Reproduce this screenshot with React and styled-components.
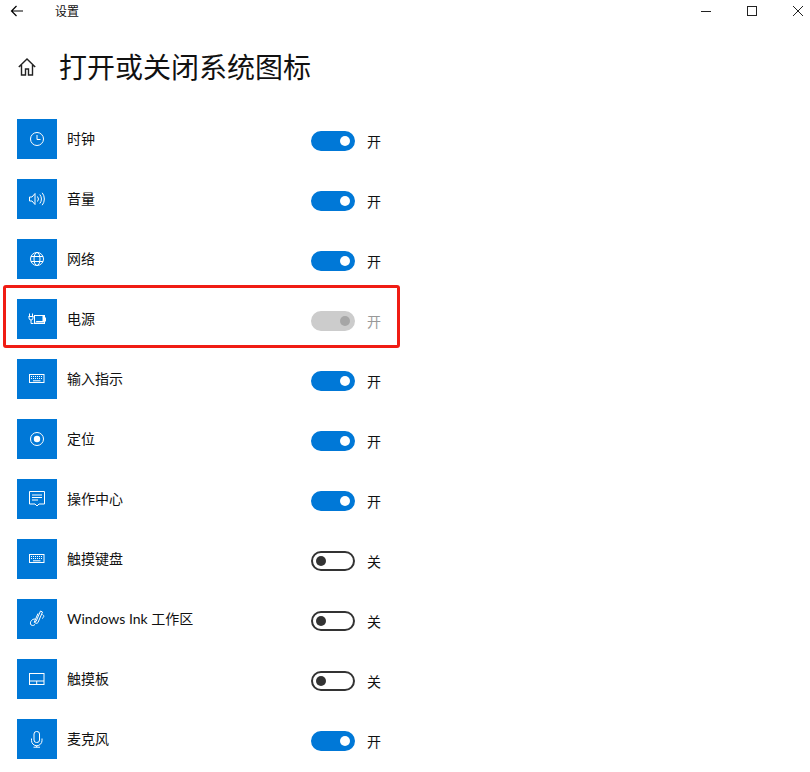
import styled, { createGlobalStyle } from 'styled-components'

const Icons = {
  clock: (
    <>
      <circle cx="20" cy="20" r="6.500" />
      <path d="M20 16v4.500h3.500" />
    </>
  ),
  volume: (
    <>
      <path d="M12.500 18h2.500l3-3.500v11l-3-3.500h-2.500z" />
      <path d="M20.500 17.500a4 4 0 0 1 0 5" />
      <path d="M22.800 15.500a7 7 0 0 1 0 9" />
      <path d="M25.200 13.800a10 10 0 0 1 0 12.400" />
    </>
  ),
  globe: (
    <>
      <circle cx="20" cy="20" r="6.500" />
      <ellipse cx="20" cy="20" rx="3" ry="6.500" />
      <path d="M14 17.500h12M14 22.500h12" />
    </>
  ),
  power: (
    <>
      <path d="M12.500 14.500v3M15.500 14.500v3M11.500 17.500h5M12 17.500v1.500a2 2 0 0 0 4 0v-1.500M14 21v3.500h2.500" />
      <rect x="17.500" y="16.500" width="10" height="8" />
      <path d="M28.500 18.500v4" />
      <path d="M18 23.500h9v-6.500h-1.500v5h-6z" fill="#fff" stroke="none" />
    </>
  ),
  keyboard: (
    <>
      <rect x="12.500" y="15.500" width="14.500" height="8" />
      <path d="M14 17.500h11.500M14 19.500h11.500" strokeDasharray="1 1" />
      <path d="M16 21.800h7.500" />
    </>
  ),
  location: (
    <>
      <circle cx="20" cy="20" r="6.500" />
      <circle cx="20" cy="20" r="3.200" fill="#fff" stroke="none" />
    </>
  ),
  action: (
    <>
      <path d="M12.500 12.500h15v12.500h-5.500l-2 2-2-2h-5.500z" />
      <path d="M15 16h10M15 18.500h10M15 21h6" />
    </>
  ),
  pen: (
    <>
      <path d="M19 22.500l4.500-10.500 2 1-4.500 10.500a2 2 0 0 1-3.500-.5z" />
      <path d="M21 14.500l-3.800 8.800M25.500 15.500c2 1 1.500 3-.5 4" />
      <path d="M18 20c-3 0-5 2.500-4.500 5 .4 1.800 3 2 4.500.500" />
    </>
  ),
  touchpad: (
    <>
      <rect x="12.500" y="14.500" width="14.500" height="11" />
      <path d="M12.500 22h14.500M19.700 22v3.500" />
    </>
  ),
  mic: (
    <>
      <rect x="17" y="12.500" width="5.500" height="11" rx="2.500" />
      <path d="M14.500 19.500v2a5.200 5.200 0 0 0 10.500 0v-2M19.700 26.700v1.500M16.500 28.200h6.500" />
    </>
  ),
}

const SETTINGS = [
  { id: 'clock', name: '时钟', on: true },
  { id: 'volume', name: '音量', on: true },
  { id: 'globe', name: '网络', on: true },
  { id: 'power', name: '电源', on: true, disabled: true },
  { id: 'keyboard', name: '输入指示', on: true },
  { id: 'location', name: '定位', on: true },
  { id: 'action', name: '操作中心', on: true },
  { id: 'keyboard', name: '触摸键盘', on: false },
  { id: 'pen', name: 'Windows Ink 工作区', on: false },
  { id: 'touchpad', name: '触摸板', on: false },
  { id: 'mic', name: '麦克风', on: true },
]

function App() {
  return (
    <Page>
      <GlobalStyle />
      <TitleBar>
        <BackIcon width="14" height="12" viewBox="0 0 14 12">
          <path d="M13 6H1.500M6.500 1l-5 5 5 5" />
        </BackIcon>
        <AppName>设置</AppName>
        <WindowControls>
          <BarIcon width="10" height="10" viewBox="0 0 10 10"><path d="M0 5.500h10" /></BarIcon>
          <BarIcon width="10" height="10" viewBox="0 0 10 10"><rect x=".5" y=".5" width="9" height="9" /></BarIcon>
          <BarIcon width="10" height="10" viewBox="0 0 10 10"><path d="M0 0l10 10M10 0L0 10" /></BarIcon>
        </WindowControls>
      </TitleBar>

      <Heading>
        <HomeIcon width="18" height="18" viewBox="0 0 18 18">
          <path d="M.8 9L9 1l8.200 8M3.500 7v10h4v-6h3v6h4V7" />
        </HomeIcon>
        <Title>打开或关闭系统图标</Title>
      </Heading>

      <List>
        {SETTINGS.map(item => (
          <Row key={item.name}>
            {item.disabled && <Highlight />}
            <Tile>
              <TileIcon viewBox="0 0 40 40">{Icons[item.id]}</TileIcon>
            </Tile>
            <Label>{item.name}</Label>
            <Toggle $on={item.on} $disabled={item.disabled}>
              <Knob $on={item.on} $disabled={item.disabled} />
            </Toggle>
            <StateText $disabled={item.disabled}>{item.on ? '开' : '关'}</StateText>
          </Row>
        ))}
      </List>
    </Page>
  )
}

export default App

/***************************** Styled Components *****************************/

const GlobalStyle = createGlobalStyle`
  html, body {
    margin: 0;
    background: #fff;
  }
`

const Page = styled.div`
  width: 810px;
  height: 772px;
  overflow: hidden;
  background: #fff;
  color: #000;
  font-family: Lato, "Noto Sans CJK SC", sans-serif;
`

const TitleBar = styled.div`
  display: flex;
  align-items: center;
  height: 22px;
  padding: 0 7px 0 10px;
`

const BarIcon = styled.svg`
  fill: none;
  stroke: #222;
  stroke-width: 1;
`

const BackIcon = styled(BarIcon)`
  stroke: #000;
  stroke-width: 1.2;
`

const AppName = styled.div`
  margin: 2px 0 0 31px;
  font-size: 12px;
  line-height: 22px;
  color: #111;
`

const WindowControls = styled.div`
  display: flex;
  gap: 36px;
  margin-left: auto;
`

const Heading = styled.div`
  display: flex;
  align-items: center;
  height: 44px;
  margin-top: 23px;
  padding-left: 18px;
`

const HomeIcon = styled.svg`
  fill: none;
  stroke: #222;
  stroke-width: 1.4;
`

const Title = styled.h1`
  margin: -1px 0 0 23px;
  font-size: 28px;
  font-weight: 400;
  line-height: 44px;
  color: #111;
`

const List = styled.div`
  display: flex;
  flex-direction: column;
  gap: 20px;
  margin-top: 30px;
  padding-left: 17px;
`

const Row = styled.div`
  position: relative;
  display: flex;
  align-items: flex-start;
  height: 40px;
`

const Highlight = styled.div`
  position: absolute;
  left: -14px;
  top: -14px;
  width: 397px;
  height: 63px;
  box-sizing: border-box;
  border: 3px solid #f01c14;
  border-radius: 3px;
`

const Tile = styled.div`
  width: 40px;
  height: 40px;
  flex: none;
  background: #0078d7;
`

const TileIcon = styled.svg`
  display: block;
  width: 40px;
  height: 40px;
  fill: none;
  stroke: #fff;
  stroke-width: 1;
`

const Label = styled.div`
  width: 244px;
  margin-left: 10px;
  font-size: 14px;
  line-height: 40px;
  color: #111;
`

const Toggle = styled.div`
  display: flex;
  align-items: center;
  justify-content: ${props => (props.$on ? 'flex-end' : 'flex-start')};
  box-sizing: border-box;
  width: 44px;
  height: 20px;
  margin-top: 12px;
  padding: 0 3px;
  border: 2px solid ${props => (props.$disabled ? '#ccc' : props.$on ? '#0078d7' : '#333')};
  border-radius: 10px;
  background: ${props => (props.$disabled ? '#ccc' : props.$on ? '#0078d7' : '#fff')};
`

const Knob = styled.div`
  width: 10px;
  height: 10px;
  border-radius: 50%;
  background: ${props => (props.$disabled ? '#a6a6a6' : props.$on ? '#fff' : '#333')};
`

const StateText = styled.div`
  margin-left: 12px;
  margin-top: 3px;
  font-size: 14px;
  line-height: 40px;
  color: ${props => (props.$disabled ? '#999' : '#111')};
`
